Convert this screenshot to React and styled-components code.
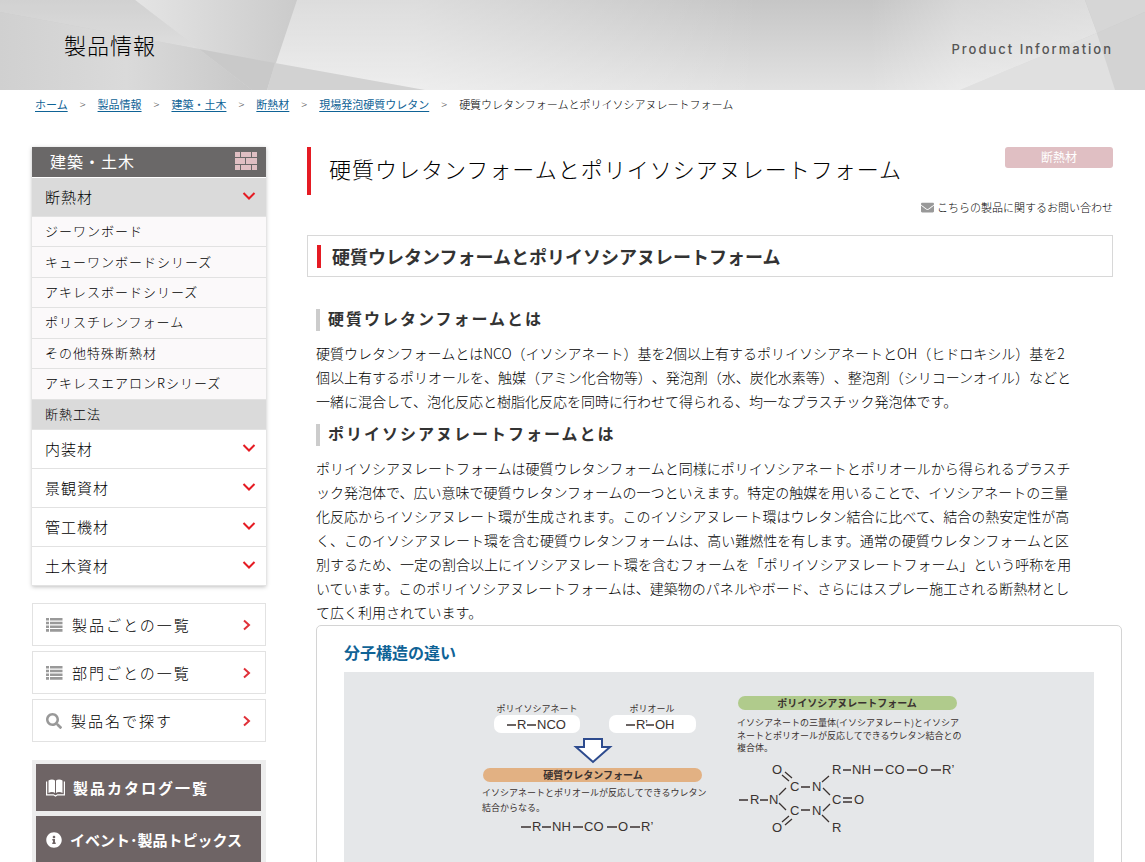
import React from 'react';
import styled, { createGlobalStyle } from 'styled-components';
import { FaSearch, FaInfoCircle, FaEnvelope } from 'react-icons/fa';

const GlobalStyle = createGlobalStyle`
  * {
    box-sizing: border-box;
  }
  body {
    margin: 0;
    background: #fff;
    color: #000;
    font-family: "Noto Sans CJK JP", sans-serif;
    font-weight: 300;
    font-size: 14px;
    text-spacing-trim: space-all;
  }
  h1, h2, h3, h4, p, ul, ol {
    margin: 0;
    padding: 0;
  }
  li {
    list-style: none;
  }
  a {
    color: inherit;
    text-decoration: none;
  }
  button {
    font: inherit;
    color: inherit;
    border: 0;
    cursor: pointer;
  }
`;

const Page = styled.div`
  height: 100vh;
  overflow: hidden;
`;

const Header = styled.header`
  position: relative;
  display: flex;
  justify-content: space-between;
  align-items: center;
  height: 90px;
  padding: 0 32px 2px 64px;
`;

const HeaderArt = styled.svg`
  position: absolute;
  inset: 0;
  width: 100%;
  height: 100%;
  z-index: -1;
`;

const HeaderTitle = styled.p`
  font-size: 22px;
  letter-spacing: 1px;
`;

const HeaderSub = styled.p`
  padding-top: 10px;
  color: #555;
  font-family: Inter, "Noto Sans CJK JP", sans-serif;
  font-size: 13px;
  font-weight: 500;
  letter-spacing: 2px;
`;

const Breadcrumb = styled.ol`
  display: flex;
  align-items: center;
  height: 28px;
  padding: 0 35px;
  font-size: 11px;

  li + li::before {
    content: '>';
    margin: 0 12px;
    color: #555;
  }
  a {
    color: #0f6396;
    font-weight: 400;
    text-decoration: underline;
    text-underline-offset: 2px;
  }
`;

const Columns = styled.div`
  display: grid;
  grid-template-columns: 234px minmax(0, 1fr);
  gap: 41px;
  padding: 29px 32px 0;
`;

const Menu = styled.nav`
  margin-bottom: 17px;
  box-shadow: 0 1px 4px rgba(0, 0, 0, 0.25);
`;

const MenuTitle = styled.h2`
  display: flex;
  align-items: center;
  justify-content: space-between;
  height: 31px;
  padding: 0 9px 2px 18px;
  border-bottom: 1px solid #fff;
  background: #6a6868;
  color: #fff;
  font-size: 16px;
  font-weight: 400;
  letter-spacing: 1px;
`;

const Category = styled.button`
  display: flex;
  align-items: center;
  justify-content: space-between;
  width: 100%;
  height: 39px;
  padding: 0 10px 2px 13px;
  border-bottom: 1px solid #e2e2e2;
  background: ${(props) => (props.$open ? '#dadada' : '#fff')};
  font-size: 15px;
  letter-spacing: 1px;
`;

const SubMenu = styled.ul`
  display: grid;
  grid-auto-rows: 1fr;
  height: 213px;
`;

const SubLink = styled.a`
  display: flex;
  align-items: center;
  height: 100%;
  padding: 0 13px 2px;
  border-bottom: 1px solid #e2e2e2;
  background: ${(props) => (props.$current ? '#dadada' : '#fbf9fa')};
  font-size: 13px;
  letter-spacing: 1px;
`;

const LinkList = styled.div`
  display: flex;
  flex-direction: column;
  gap: 5px;
  margin-bottom: 18px;
`;

const BoxLink = styled.a`
  display: flex;
  align-items: center;
  height: 43px;
  padding: 0 13px;
  border: 1px solid #e2e2e2;
  font-size: 15px;
  letter-spacing: 2px;

  > svg:first-child {
    margin-right: 9px;
    color: #999;
  }
  > svg:last-child {
    margin-left: auto;
  }
`;

const Banners = styled.div`
  display: flex;
  flex-direction: column;
  gap: 5px;
  padding: 4px 5px 4px 4px;
  background: #ededed;
`;

const Banner = styled.a`
  display: flex;
  align-items: center;
  gap: 8px;
  height: 47px;
  padding: 0 10px;
  background: #6e6465;
  color: #fff;
  font-size: 15px;
  font-weight: 700;
  letter-spacing: ${(props) => (props.$wide ? '2px' : '0')};
`;

const TitleRow = styled.div`
  display: flex;
  justify-content: space-between;
  align-items: flex-start;
  height: 88px;
`;

const PageTitle = styled.h1`
  height: 48px;
  padding-left: 18px;
  border-left: 4px solid #e51b23;
  font-size: 22px;
  font-weight: 300;
  line-height: 42px;
  letter-spacing: 1px;
`;

const TitleSide = styled.div`
  display: flex;
  flex-direction: column;
  align-items: flex-end;
  gap: 30px;
`;

const Tag = styled.span`
  width: 108px;
  padding-bottom: 2px;
  border-radius: 3px;
  background: #e0bfc3;
  color: #fff;
  font-size: 12px;
  font-weight: 400;
  line-height: 19px;
  text-align: center;
`;

const Contact = styled.a`
  display: flex;
  align-items: center;
  gap: 3px;
  font-size: 11px;
  line-height: 18px;

  svg {
    color: #999;
  }
`;

const BoxHeading = styled.h2`
  display: flex;
  align-items: center;
  height: 42px;
  margin-bottom: 32px;
  padding-left: 9px;
  border: 1px solid #d8d8d8;
  color: #333;
  font-size: 18px;
  font-weight: 700;

  &::before {
    content: '';
    width: 4px;
    height: 23px;
    margin-right: 11px;
    background: #e51b23;
  }
`;

const Section = styled.section`
  margin-left: 9px;
`;

const BarHeading = styled.h3`
  padding: 0 0 3px 8px;
  border-left: 4px solid #ccc;
  color: #333;
  font-size: 16px;
  font-weight: 700;
  line-height: 19px;
  letter-spacing: 2px;
`;

const Text = styled.p`
  padding: 10px 36px 11px 0;
  font-size: 14px;
  line-height: 24px;
`;

const Panel = styled.div`
  margin: -10px -9px 0 9px;
  padding: 14px 27px 28px;
  border: 1px solid #d4d4d4;
  border-radius: 5px;
`;

const PanelTitle = styled.h4`
  margin-bottom: 8px;
  color: #0f6396;
  font-size: 16px;
  font-weight: 700;
  line-height: 24px;
`;

const Figure = styled.svg`
  display: block;
  width: 100%;
  height: auto;
  background: #e5e7e9;
`;

const subItems = [
  'ジーワンボード',
  'キューワンボードシリーズ',
  'アキレスボードシリーズ',
  'ポリスチレンフォーム',
  'その他特殊断熱材',
  'アキレスエアロンRシリーズ',
  '断熱工法',
];

const crumbs = ['ホーム', '製品情報', '建築・土木', '断熱材', '現場発泡硬質ウレタン'];

function Down() {
  return (
    <svg width="14" height="10" viewBox="0 0 14 10" fill="none" stroke="#e51b23" strokeWidth="2">
      <path d="M1.5 2 L7 7.5 L12.5 2" />
    </svg>
  );
}

function Next() {
  return (
    <svg width="10" height="12" viewBox="0 0 10 12" fill="none" stroke="#e03038" strokeWidth="2">
      <path d="M2 1.5 L7 6 L2 10.5" />
    </svg>
  );
}

function ListIcon() {
  return (
    <svg width="17" height="14" viewBox="0 0 17 14" fill="currentColor">
      {[0, 3.7, 7.4, 11.1].map((y) => (
        <path key={y} d={`M0 ${y}h3v2.6h-3z M4 ${y}h12.5v2.6h-12.5z`} />
      ))}
    </svg>
  );
}

function BookIcon() {
  return (
    <svg width="19" height="18" viewBox="0 0 19 18" fill="#fff">
      <path d="M2.5 1.5 C4.5 0 7.5 0 9 1.5 V14 C7.5 12.8 4.5 12.8 2.5 14z" />
      <path d="M10 1.5 C11.5 0 14.5 0 16.5 1.5 V14 C14.5 12.8 11.5 12.8 10 14z" />
      <path
        d="M0.6 2.5 V15.8 H7.5 L9.5 17 L11.5 15.8 H18.4 V2.5"
        fill="none"
        stroke="#fff"
        strokeWidth="1.2"
      />
    </svg>
  );
}

function Bricks() {
  return (
    <svg width="22" height="18" viewBox="0 0 22 18" fill="#e0bfc3">
      <path d="M0 0h5v5h-5z M6 0h10v5h-10z M17 0h5v5h-5z" />
      <path d="M0 6h10v6h-10z M11 6h11v6h-11z" />
      <path d="M0 13h5v5h-5z M6 13h10v5h-10z M17 13h5v5h-5z" />
    </svg>
  );
}

function HeaderPattern() {
  return (
    <HeaderArt viewBox="0 0 1145 90" preserveAspectRatio="none" aria-hidden="true">
      <defs>
        <linearGradient id="base" x1="0" y1="0" x2="0" y2="1">
          <stop offset="0" stopColor="#c6c6c6" />
          <stop offset="1" stopColor="#e2e2e2" />
        </linearGradient>
        <linearGradient id="glow" x1="0" y1="0" x2="1" y2="0">
          <stop offset="0" stopColor="#fff" stopOpacity="0.4" />
          <stop offset="0.3" stopColor="#fff" stopOpacity="0.4" />
          <stop offset="1" stopColor="#fff" stopOpacity="0" />
        </linearGradient>
        <linearGradient id="shine" x1="0" y1="0" x2="1" y2="0">
          <stop offset="0" stopColor="#fff" stopOpacity="0" />
          <stop offset="0.4" stopColor="#fff" stopOpacity="0.3" />
          <stop offset="1" stopColor="#fff" stopOpacity="0.4" />
        </linearGradient>
        <linearGradient id="low" x1="0" y1="0" x2="1" y2="0">
          <stop offset="0" stopColor="#d0d0d0" />
          <stop offset="0.5" stopColor="#dadada" />
          <stop offset="1" stopColor="#c8c8c8" />
        </linearGradient>
        <linearGradient id="mid" x1="0" y1="0" x2="1" y2="0">
          <stop offset="0" stopColor="#e4e4e4" />
          <stop offset="1" stopColor="#cbcbcb" />
        </linearGradient>
      </defs>
      <path fill="url(#base)" d="M0 0h1145v90h-1145z" />
      <path fill="#fff" fillOpacity="0.2" d="M0 0 L135 0 L199 49 L0 12z" />
      <path fill="url(#mid)" d="M135 0 L297 0 L267 90 L252 90z" />
      <path fill="url(#glow)" d="M297 0 L760 0 L760 90 L267 90z" />
      <path fill="url(#low)" d="M0 12 L199 49 L252 90 L0 90z" />
      <path fill="#c9c9c9" d="M199 49 L275 63 L267 90 L252 90z" />
      <path fill="#d2d2d2" d="M275 63 L425 90 L267 90z" />
      <path fill="url(#shine)" d="M870 0 L1085 0 L1097 33 L960 90 L870 90z" />
      <path fill="#e0e0e0" d="M1097 33 L1115 90 L960 90z" />
      <path fill="#d6d6d6" d="M1085 0 L1145 0 L1145 12 L1097 33z" />
      <path fill="#d3d3d3" d="M1145 12 L1145 90 L1115 90 L1097 33z" />
    </HeaderArt>
  );
}

const jp = '"Noto Sans CJK JP", sans-serif';
const latin = '"Liberation Sans", sans-serif';

// atom labels: [x, baseline, text]
const atoms = [
  [517, 729, 'R'], [537, 729, 'NCO'],
  [636, 729, 'R'], [645, 729, '’'], [655, 729, 'OH'],
  [532, 831, 'R'], [552, 831, 'NH'], [584, 831, 'CO'], [618, 831, 'O'], [641, 831, 'R’'],
  [772, 774, 'O'], [832, 774, 'R'], [852, 774, 'NH'], [885, 774, 'CO'], [918, 774, 'O'], [942, 774, 'R’'],
  [790, 791, 'C'], [812, 791, 'N'],
  [750, 804, 'R'], [769, 804, 'N'], [832, 804, 'C'], [854, 804, 'O'],
  [790, 815, 'C'], [812, 815, 'N'],
  [772, 832, 'O'], [832, 832, 'R'],
];

const bonds = `
  M507 725h9 M527 725h9 M626 725h9 M646 725h8
  M521 827h10 M542 827h9 M573 827h10 M607 827h10 M630 827h10
  M843 770h8 M874 770h9 M907 770h10 M931 770h10
  M739 800h9 M760 800h8 M801 787h9 M801 810h9
  M843 798h9 M843 802h9
  M782 775l7 6 M785 772l7 6
  M779 795l7 -7 M779 803l7 7
  M822 782l7 -6 M823 788l7 7 M823 811l7 -7 M822 815l7 7
  M782 822l7 -6 M785 825l7 -6
`;

function Molecules() {
  return (
    <Figure viewBox="344 672 750 300" role="img" aria-label="分子構造の違い">
      <g fill="#fff">
        <rect x="494" y="715" width="86" height="18" rx="7" />
        <rect x="609" y="715" width="87" height="18" rx="7" />
      </g>
      <rect x="483" y="768" width="219" height="14" rx="7" fill="#e2b183" />
      <rect x="738" y="696" width="219" height="14" rx="7" fill="#b0cb8c" />
      <path
        d="M584 739h18v8h8l-17 15l-17 -15h8z"
        fill="#fff"
        stroke="#2d4b8e"
        strokeWidth="2"
      />
      <g fill="#3a3230" fontFamily={jp} fontSize="9" fontWeight="400">
        <text x="537" y="712" textAnchor="middle">ポリイソシアネート</text>
        <text x="652" y="712" textAnchor="middle">ポリオール</text>
        <text x="482" y="796">イソシアネートとポリオールが反応してできるウレタン</text>
        <text x="482" y="811">結合からなる。</text>
        <text x="737" y="726">イソシアネートの三量体(イソシアヌレート)とイソシア</text>
        <text x="737" y="739">ネートとポリオールが反応してできるウレタン結合との</text>
        <text x="737" y="751">複合体。</text>
      </g>
      <g fill="#3a3230" fontFamily={jp} fontSize="10" fontWeight="700" textAnchor="middle">
        <text x="593" y="779">硬質ウレタンフォーム</text>
        <text x="847" y="707">ポリイソシアヌレートフォーム</text>
      </g>
      <g fill="#3a3230" fontFamily={latin} fontSize="13" fontWeight="400">
        {atoms.map(([x, y, label]) => (
          <text key={`${x}-${y}`} x={x} y={y}>{label}</text>
        ))}
      </g>
      <path d={bonds} fill="none" stroke="#3a3230" strokeWidth="1.3" />
    </Figure>
  );
}

export default function App() {
  return (
    <>
      <GlobalStyle />
      <Page>
        <Header>
          <HeaderPattern />
          <HeaderTitle>製品情報</HeaderTitle>
          <HeaderSub>Product Information</HeaderSub>
        </Header>
        <Breadcrumb>
          {crumbs.map((name) => (
            <li key={name}><a href="#">{name}</a></li>
          ))}
          <li>硬質ウレタンフォームとポリイソシアヌレートフォーム</li>
        </Breadcrumb>
        <Columns>
          <aside>
            <Menu>
              <MenuTitle>建築・土木<Bricks /></MenuTitle>
              <Category $open>断熱材<Down /></Category>
              <SubMenu>
                {subItems.map((name) => (
                  <li key={name}>
                    <SubLink href="#" $current={name === '断熱工法'}>{name}</SubLink>
                  </li>
                ))}
              </SubMenu>
              <Category>内装材<Down /></Category>
              <Category>景観資材<Down /></Category>
              <Category>管工機材<Down /></Category>
              <Category>土木資材<Down /></Category>
            </Menu>
            <LinkList>
              <BoxLink href="#"><ListIcon />製品ごとの一覧<Next /></BoxLink>
              <BoxLink href="#"><ListIcon />部門ごとの一覧<Next /></BoxLink>
              <BoxLink href="#"><FaSearch size={16} />製品名で探す<Next /></BoxLink>
            </LinkList>
            <Banners>
              <Banner href="#" $wide><BookIcon />製品カタログ一覧</Banner>
              <Banner href="#"><FaInfoCircle size={16} />イベント･製品トピックス</Banner>
            </Banners>
          </aside>
          <main>
            <TitleRow>
              <PageTitle>硬質ウレタンフォームとポリイソシアヌレートフォーム</PageTitle>
              <TitleSide>
                <Tag>断熱材</Tag>
                <Contact href="#"><FaEnvelope size={13} />こちらの製品に関するお問い合わせ</Contact>
              </TitleSide>
            </TitleRow>
            <BoxHeading>硬質ウレタンフォームとポリイソシアヌレートフォーム</BoxHeading>
            <Section>
              <BarHeading>硬質ウレタンフォームとは</BarHeading>
              <Text>
                硬質ウレタンフォームとはNCO（イソシアネート）基を2個以上有するポリイソシアネートとOH（ヒドロキシル）基を2個以上有するポリオールを、触媒（アミン化合物等）、発泡剤（水、炭化水素等）、整泡剤（シリコーンオイル）などと一緒に混合して、泡化反応と樹脂化反応を同時に行わせて得られる、均一なプラスチック発泡体です。
              </Text>
              <BarHeading>ポリイソシアヌレートフォームとは</BarHeading>
              <Text>
                ポリイソシアヌレートフォームは硬質ウレタンフォームと同様にポリイソシアネートとポリオールから得られるプラスチック発泡体で、広い意味で硬質ウレタンフォームの一つといえます。特定の触媒を用いることで、イソシアネートの三量化反応からイソシアヌレート環が生成されます。このイソシアヌレート環はウレタン結合に比べて、結合の熱安定性が高く、このイソシアヌレート環を含む硬質ウレタンフォームは、高い難燃性を有します。通常の硬質ウレタンフォームと区別するため、一定の割合以上にイソシアヌレート環を含むフォームを「ポリイソシアヌレートフォーム」という呼称を用いています。このポリイソシアヌレートフォームは、建築物のパネルやボード、さらにはスプレー施工される断熱材として広く利用されています。
              </Text>
            </Section>
            <Panel>
              <PanelTitle>分子構造の違い</PanelTitle>
              <Molecules />
            </Panel>
          </main>
        </Columns>
      </Page>
    </>
  );
}
